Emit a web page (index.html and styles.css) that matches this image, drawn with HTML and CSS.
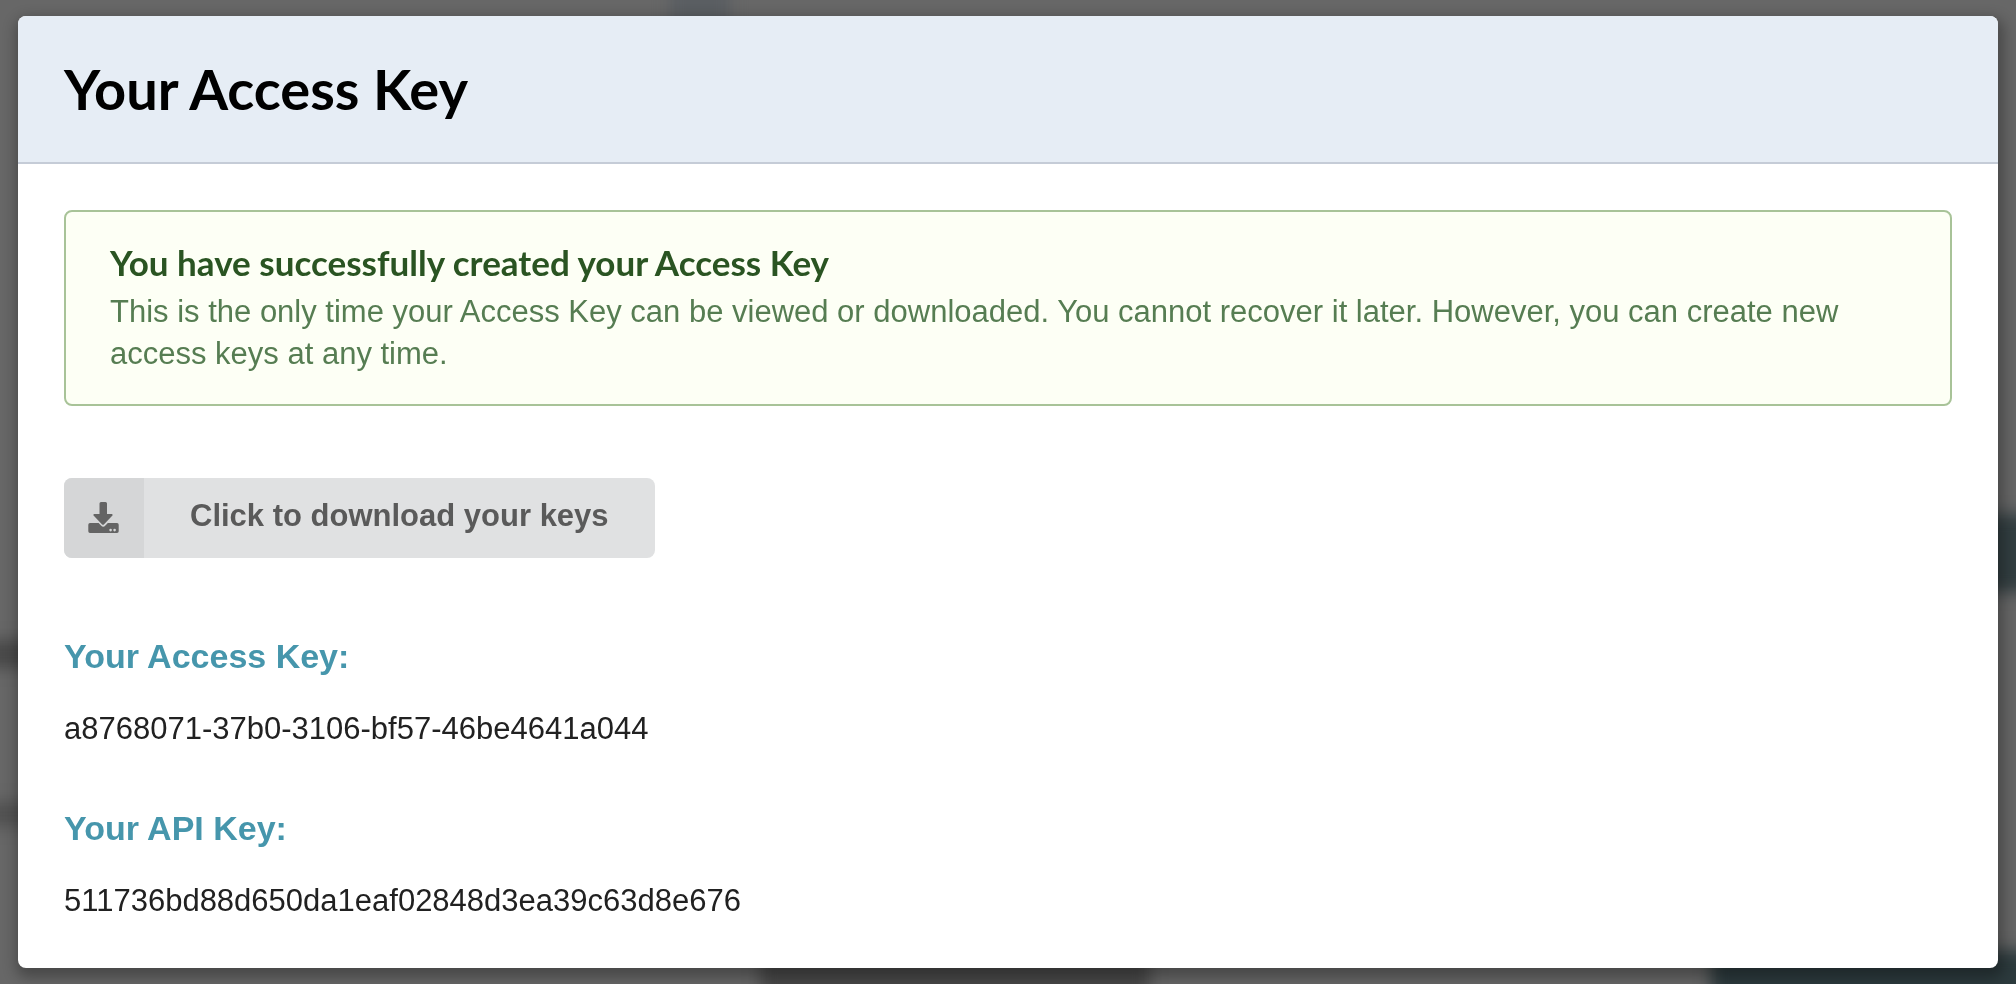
FILE: index.html
```html
<!DOCTYPE html>
<html lang="en">
<head>
<meta charset="utf-8">
<title>Your Access Key</title>
<link rel="stylesheet" href="styles.css">
</head>
<body>
<div class="backdrop" aria-hidden="true">
  <span class="shade shade-tab"></span>
  <span class="shade shade-left-upper"></span>
  <span class="shade shade-left-lower"></span>
  <span class="shade shade-button"></span>
  <span class="shade shade-caption"></span>
  <span class="shade shade-footer"></span>
</div>
<main class="modal" role="dialog" aria-labelledby="modal-title">
  <header class="modal-header">
    <h1 class="modal-title" id="modal-title">Your Access Key</h1>
  </header>
  <div class="modal-content">
    <section class="message">
      <h2 class="message-title">You have successfully created your Access Key</h2>
      <p class="message-text">This is the only time your Access Key can be viewed or downloaded. You cannot recover it later. However, you can create new access keys at any time.</p>
    </section>
    <button class="download" type="button">
      <span class="download-icon">
        <svg viewBox="0 0 32 32" width="32" height="32" aria-hidden="true">
          <path fill="currentColor" d="M13 0h4.500a1.500 1.500 0 0 1 1.500 1.500V12h4.300c1.300 0 1.700 1 .9 1.800l-8.100 8.400a1.500 1.500 0 0 1-2.200 0l-8.100-8.400c-.8-.8-.4-1.800.9-1.800h4.800V1.500A1.500 1.500 0 0 1 13 0z"/>
          <path fill="currentColor" fill-rule="evenodd" d="M2 21h8.600l2.400 2.600a3 3 0 0 0 4.400 0l2.400-2.600H29a1.700 1.700 0 0 1 1.700 1.700v6.600A1.700 1.700 0 0 1 29 31H2a1.700 1.700 0 0 1-1.700-1.700v-6.600A1.700 1.700 0 0 1 2 21zM22.600 26.800a1.300 1.300 0 1 0 0 2.600 1.300 1.300 0 0 0 0-2.600zM26.600 26.800a1.300 1.300 0 1 0 0 2.600 1.300 1.300 0 0 0 0-2.600z"/>
        </svg>
      </span>
      <span class="download-label">Click to download your keys</span>
    </button>
    <dl class="keys">
      <dt class="key-name">Your Access Key:</dt>
      <dd class="key-value">a8768071-37b0-3106-bf57-46be4641a044</dd>
      <dt class="key-name">Your API Key:</dt>
      <dd class="key-value">511736bd88d650da1eaf02848d3ea39c63d8e676</dd>
    </dl>
  </div>
</main>
</body>
</html>
```
FILE: styles.css
```css
* {
  box-sizing: border-box;
}

body {
  margin: 0;
  min-height: 100vh;
  padding: 16px 18px;
  background: #676767;
  color: #212121;
  font-family: "Liberation Sans", Arial, sans-serif;
  font-size: 31px;
  line-height: 42px;
}

h1, h2, p, dl, dd {
  margin: 0;
}

/* Dimmed, out-of-focus page behind the dialog */
.backdrop {
  position: fixed;
  inset: 0;
  z-index: -1;
  overflow: hidden;
}

.shade {
  position: absolute;
  filter: blur(8px);
}

.shade-tab {
  left: 670px;
  top: -20px;
  width: 60px;
  height: 60px;
  background: #5a5e62;
}

.shade-left-upper {
  left: -20px;
  top: 640px;
  width: 60px;
  height: 28px;
  background: #484848;
}

.shade-left-lower {
  left: -20px;
  top: 802px;
  width: 60px;
  height: 24px;
  background: #505050;
}

.shade-button {
  right: -20px;
  top: 514px;
  width: 80px;
  height: 78px;
  background: #323e41;
}

.shade-caption {
  left: 760px;
  bottom: -20px;
  width: 390px;
  height: 60px;
  background: #484848;
}

.shade-footer {
  right: -20px;
  bottom: -20px;
  width: 325px;
  height: 54px;
  background: #2c3a3d;
}

.modal {
  overflow: hidden;
  border-radius: 8px;
  background: #fff;
  box-shadow: 2px 6px 14px 4px rgba(0, 0, 0, 0.3);
}

.modal-header {
  padding: 37px 46px;
  border-bottom: 2px solid #c5ccd7;
  background: #e6edf5;
}

.modal-title {
  color: #000;
  font-family: Lato, sans-serif;
  font-size: 56px;
  font-weight: 700;
  line-height: 72px;
}

.modal-content {
  padding: 46px;
}

.message {
  padding: 29px 44px;
  border: 2px solid #a8c398;
  border-radius: 8px;
  background: #fdfff5;
  color: #567d52;
}

.message-title {
  padding-bottom: 8px;
  color: #2a5422;
  font-family: Lato, sans-serif;
  font-size: 35px;
  font-weight: 700;
  line-height: 42px;
}

.download {
  display: flex;
  margin-top: 72px;
  padding: 0;
  overflow: hidden;
  border: 0;
  border-radius: 8px;
  background: #e0e1e2;
  color: #5a5a5a;
  font: inherit;
  font-weight: 700;
  cursor: pointer;
}

.download-icon {
  display: grid;
  place-items: center;
  width: 80px;
  height: 80px;
  background: #d5d6d7;
  color: #646464;
}

.download-label {
  padding: 0 46px;
  line-height: 76px;
}

.keys {
  margin-top: 77px;
}

.key-name {
  color: #4696ac;
  font-size: 34px;
  font-weight: 700;
}

.key-value {
  margin-top: 31px;
}

.key-value + .key-name {
  margin-top: 57px;
}
```
